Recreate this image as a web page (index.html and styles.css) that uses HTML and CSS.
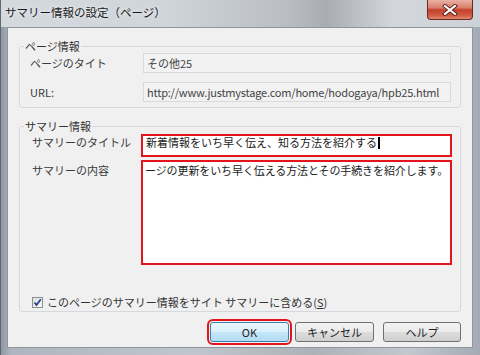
FILE: index.html
```html
<!DOCTYPE html>
<html lang="ja">

<head>
    <meta charset="UTF-8">
    <meta name="viewport" content="width=device-width, initial-scale=1.0">
    <title>サマリー情報の設定</title>
    <link rel="stylesheet" href="styles.css">
</head>

<body>
    <div class="window">
        <!-- title bar -->
        <div class="titlebar">
            <span class="caption">サマリー情報の設定（ページ）</span>
            <button class="close-btn" type="button" aria-label="閉じる">
                <svg width="16" height="12" viewBox="0 0 16 12">
                    <path d="M3 2 L13 10 M13 2 L3 10" stroke="#5a1a14" stroke-width="4" stroke-linecap="square" />
                    <path d="M3 2 L13 10 M13 2 L3 10" stroke="#ffffff" stroke-width="2.2" stroke-linecap="square" />
                </svg>
            </button>
        </div>

        <div class="client">
            <!-- page info -->
            <fieldset class="group group-page">
                <legend>ページ情報</legend>
                <div class="info-grid">
                    <span class="row-label">ページのタイト</span>
                    <div class="readonly-field">その他25</div>
                    <span class="row-label">URL:</span>
                    <div class="readonly-field url-field">http://www.justmystage.com/home/hodogaya/hpb25.html</div>
                </div>
            </fieldset>

            <!-- summary info -->
            <fieldset class="group group-summary">
                <legend>サマリー情報</legend>
                <div class="summary-grid">
                    <label class="row-label label-title">サマリーのタイトル</label>
                    <div class="edit-field title-field">新着情報をいち早く伝え、知る方法を紹介する<span class="caret"></span></div>
                    <label class="row-label label-content">サマリーの内容</label>
                    <div class="edit-field content-field">ージの更新をいち早く伝える方法とその手続きを紹介します。</div>
                </div>
                <label class="check-row">
                    <span class="checkbox">
                        <svg width="9" height="9" viewBox="0 0 9 9">
                            <path d="M1.5 4.5 L3.5 7 L7.8 1.2" fill="none" stroke="#24428f" stroke-width="1.8" />
                        </svg>
                    </span>
                    このページのサマリー情報をサイト サマリーに含める(<u>S</u>)
                </label>
            </fieldset>

            <!-- buttons -->
            <div class="button-row">
                <button class="btn btn-ok" type="button">OK</button>
                <button class="btn" type="button">キャンセル</button>
                <button class="btn btn-help" type="button">ヘルプ</button>
            </div>
        </div>
    </div>
</body>

</html>
```

FILE: styles.css
```css
* {
    box-sizing: border-box;
    margin: 0;
    padding: 0;
}

body {
    width: 480px;
    height: 355px;
    overflow: hidden;
    font-family: "Noto Sans CJK JP", "Noto Sans", sans-serif;
    font-size: 11px;
    color: #333;
}

.window {
    display: flex;
    flex-direction: column;
    width: 480px;
    height: 355px;
    background: linear-gradient(to right, #8f98a4 0%, #aeb5be 2%, #c0c6cd 40%, #adb2b8 65%, #c3c8ce 85%, #a4abb4 100%);
    border-left: 1px solid #5f6670;
}

/* title bar */

.titlebar {
    display: flex;
    align-items: flex-start;
    height: 27px;
    background: linear-gradient(to right, #d4d9df 0%, #d0d5db 35%, #b9bdc1 60%, #a9adb1 68%, #d3d7db 82%, #cdd2d8 100%);
}

.caption {
    padding-left: 4px;
    line-height: 24px;
    font-size: 11.5px;
    color: #1b1b1b;
    text-shadow: 0 0 5px rgba(255, 255, 255, 0.95);
}

.close-btn {
    display: flex;
    align-items: center;
    justify-content: center;
    margin-left: auto;
    margin-right: 7px;
    width: 46px;
    height: 20px;
    border: 1px solid #6b2a22;
    border-top: none;
    border-radius: 0 0 4px 4px;
    background: linear-gradient(#eab0a4 0%, #d9806d 40%, #c4412c 52%, #cf5a3f 80%, #e08a6c 100%);
}

/* client area */

.client {
    display: flex;
    flex-direction: column;
    margin: 0 7px 0 6px;
    height: 321px;
    padding: 12px 11px 3px;
    border: 1px solid #8e959d;
    background-color: #f0f0f0;
}

.group {
    border: 1px solid #d5d9dd;
    border-radius: 3px;
    min-inline-size: 0;
}

.group legend {
    line-height: 12px;
    padding: 0 1px;
    color: #333;
}

.group-page {
    padding: 1px 9px 5px 10px;
}

.group-page legend {
    margin-left: -6px;
}

.group-summary {
    margin-top: 12px;
    padding: 2px 8px 2px 12px;
}

.group-summary legend {
    margin-left: -8px;
}

.row-label {
    line-height: 12px;
    color: #3a3a3a;
    white-space: nowrap;
}

.info-grid {
    display: grid;
    grid-template-columns: 113px 1fr;
    grid-auto-rows: 20px;
    row-gap: 9px;
    align-items: center;
}

.readonly-field {
    display: flex;
    align-items: center;
    height: 20px;
    padding-left: 3px;
    border: 1px solid #d9d9d9;
    background-color: #f2f2f2;
    color: #444;
    white-space: nowrap;
    overflow: hidden;
}

.url-field {
    letter-spacing: -0.2px;
}

.summary-grid {
    display: grid;
    grid-template-columns: 109px 1fr;
    grid-template-rows: 23px 105px;
    row-gap: 3px;
    align-items: start;
}

.summary-grid .label-title {
    padding-top: 2px;
}

.summary-grid .label-content {
    padding-top: 4px;
}

.edit-field {
    height: 100%;
    border: 2px solid #e3141b;
    background-color: #fff;
    color: #222;
    line-height: 13px;
    white-space: nowrap;
    overflow: hidden;
}

.title-field {
    padding: 0 3px;
}

.content-field {
    padding: 2px 2px;
    letter-spacing: -0.1px;
}

.caret {
    display: inline-block;
    width: 2px;
    height: 12px;
    margin-left: 1px;
    vertical-align: -2px;
    background-color: #000;
}

.check-row {
    display: flex;
    align-items: center;
    height: 14px;
    margin-top: 30px;
    line-height: 14px;
    color: #333;
}

.checkbox {
    display: flex;
    align-items: center;
    justify-content: center;
    width: 11px;
    height: 11px;
    margin-right: 4px;
    border: 1px solid #8e8f8f;
    background: linear-gradient(135deg, #dedede, #fbfbfb);
}

/* dialog buttons */

.button-row {
    display: flex;
    justify-content: flex-end;
    gap: 6px;
    margin-top: 10px;
}

.btn {
    width: 79px;
    height: 20px;
    border: 1px solid #707070;
    border-radius: 3px;
    background: linear-gradient(#f2f2f2 0%, #ebebeb 50%, #dddddd 51%, #cfcfcf 100%);
    font-family: "Noto Sans CJK JP", "Noto Sans", sans-serif;
    font-size: 11px;
    color: #222;
}

.btn-ok {
    border-color: #3c7fb1;
    background: linear-gradient(#eaf6fd 0%, #d9f0fc 50%, #c4e6f8 51%, #b3dcf3 100%);
    outline: 2px solid #e3141b;
    outline-offset: 1px;
}

.btn-help {
    margin-left: 3px;
    width: 78px;
}
```
